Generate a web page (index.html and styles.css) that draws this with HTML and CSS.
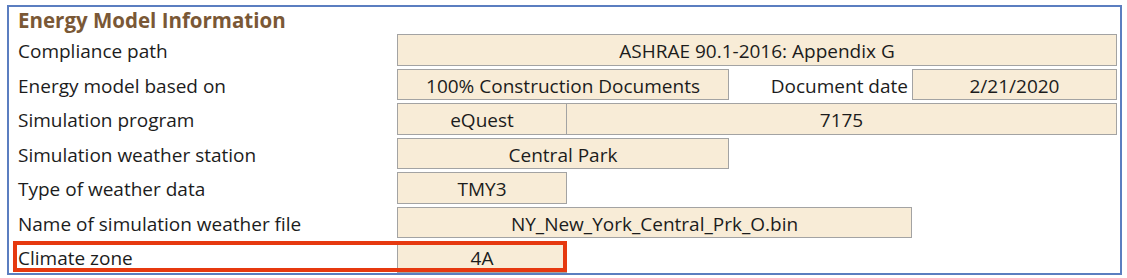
FILE: index.html
```html
<!DOCTYPE html>
<html lang="en">
<head>
    <meta charset="UTF-8">
    <meta name="viewport" content="width=device-width, initial-scale=1.0">
    <title>Energy Model Information</title>
    <link rel="stylesheet" href="styles.css">
</head>
<body>

    <div class="panel">
        <h2>Energy Model Information</h2>

        <div class="sheet">
            <div class="label">Compliance path</div>
            <div class="cell span-4">ASHRAE 90.1-2016: Appendix G</div>

            <div class="label">Energy model based on</div>
            <div class="cell span-2">100% Construction Documents</div>
            <div class="side-label">Document date</div>
            <div class="cell">2/21/2020</div>

            <div class="label">Simulation program</div>
            <div class="cell">eQuest</div>
            <div class="cell span-3 joined">7175</div>

            <div class="label">Simulation weather station</div>
            <div class="cell span-2">Central Park</div>
            <div class="fill"></div>

            <div class="label">Type of weather data</div>
            <div class="cell">TMY3</div>
            <div class="fill"></div>

            <div class="label">Name of simulation weather file</div>
            <div class="cell span-3">NY_New_York_Central_Prk_O.bin</div>
            <div class="fill"></div>

            <div class="label marked">Climate zone <span class="mark"></span></div>
            <div class="cell">4A</div>
            <div class="fill"></div>
        </div>
    </div>

</body>
</html>
```

FILE: styles.css
```css
body {
    margin: 0;
    font-family: "Open Sans", "Liberation Sans", sans-serif;
    background-color: #fff;
}

.panel {
    width: 1111px;
    margin: 5px 0 0 7px;
    border: 2px solid #5b7ec0;
}

h2 {
    margin: 0;
    padding-left: 9px;
    height: 27px;
    line-height: 27px;
    font-size: 20.5px;
    font-weight: bold;
    color: #7a5836;
}

.sheet {
    display: grid;
    grid-template-columns: 379px 170px 162px 183px 205px 1fr;
    grid-auto-rows: 31.5px;
    row-gap: 3px;
    padding-left: 9px;
}

.label {
    grid-column: 1;
    font-size: 19px;
    color: #1c1c1c;
    padding-top: 2px;
    line-height: 31.5px;
    white-space: nowrap;
}

.side-label {
    font-size: 19px;
    color: #1c1c1c;
    padding-top: 2px;
    line-height: 31.5px;
    text-align: right;
    padding-right: 4px;
    white-space: nowrap;
}

.cell {
    background-color: #f8ecd7;
    border: 1px solid #a3a3a3;
    font-size: 19px;
    color: #1c1c1c;
    text-align: center;
    padding-top: 3px;
    line-height: 26.5px;
    white-space: nowrap;
}

.span-2 { grid-column: span 2; }
.span-3 { grid-column: span 3; }
.span-4 { grid-column: span 4; }

.cell.joined {
    border-left: none;
}

.fill {
    grid-column: span 1;
}

.marked {
    position: relative;
}

/* red annotation box drawn over the climate zone row */
.mark {
    position: absolute;
    left: -5px;
    top: 0;
    width: 546px;
    height: 23px;
    border: 4px solid #e6390f;
    z-index: 2;
}
```
